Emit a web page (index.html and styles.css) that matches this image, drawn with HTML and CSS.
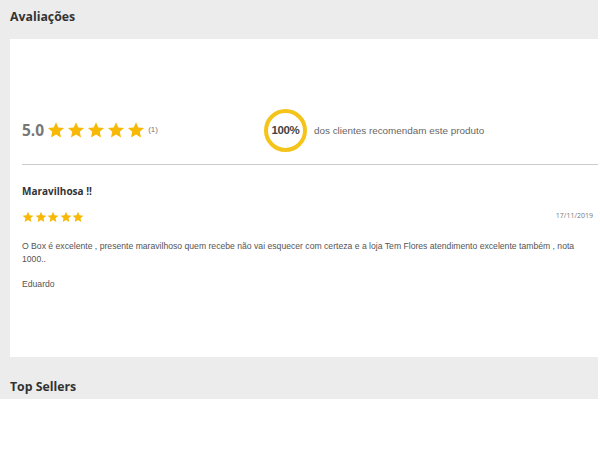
FILE: index.html
```html
<!DOCTYPE html>
<html lang="pt-BR">
<head>
<meta charset="utf-8">
<title>Avaliações</title>
<link rel="stylesheet" href="styles.css">
</head>
<body>
<svg width="0" height="0" style="position:absolute">
  <defs>
    <symbol id="star" viewBox="0 0 24 24"><path d="M12 1.5l3.1 7.1 7.7.7-5.8 5.1 1.7 7.6L12 18l-6.7 4 1.7-7.6-5.8-5.1 7.7-.7z"/></symbol>
  </defs>
</svg>
<section class="reviews">
  <h2 class="section-title">Avaliações</h2>
  <div class="card">
    <div class="summary">
      <div class="score">
        <span class="score-value">5.0</span>
        <span class="stars stars-big">
          <svg><use href="#star"/></svg><svg><use href="#star"/></svg><svg><use href="#star"/></svg><svg><use href="#star"/></svg><svg><use href="#star"/></svg>
        </span>
        <span class="score-count">(1)</span>
      </div>
      <div class="recommend">
        <div class="ring">100%</div>
        <span class="recommend-text">dos clientes recomendam este produto</span>
      </div>
    </div>
    <hr class="divider">
    <article class="review">
      <h3 class="review-title">Maravilhosa !!</h3>
      <div class="review-meta">
        <span class="stars stars-small">
          <svg><use href="#star"/></svg><svg><use href="#star"/></svg><svg><use href="#star"/></svg><svg><use href="#star"/></svg><svg><use href="#star"/></svg>
        </span>
        <span class="review-date">17/11/2019</span>
      </div>
      <p class="review-body">O Box é excelente , presente maravilhoso quem recebe não vai esquecer com certeza e a loja Tem Flores atendimento excelente também , nota 1000..</p>
      <p class="review-author">Eduardo</p>
    </article>
  </div>
  <h2 class="section-title section-title-bottom">Top Sellers</h2>
</section>
</body>
</html>
```

FILE: styles.css
```css
html, body {
  margin: 0;
  padding: 0;
  background: #ffffff;
}

.reviews {
  width: 598px;
  background: #ececec;
  padding: 7px 0 2px 10px;
  box-sizing: border-box;
}

.section-title {
  margin: 0;
  font-family: "Open Sans", sans-serif;
  font-weight: 700;
  font-size: 12.3px;
  line-height: 20px;
  color: #333333;
}

.section-title-bottom {
  margin-top: 20px;
}

.card {
  margin-top: 12px;
  background: #ffffff;
  padding: 69px 5px 66px 12px;
}

.summary {
  display: flex;
  align-items: center;
  height: 44px;
}

.score {
  display: flex;
  align-items: center;
  width: 242px;
}

.score-value {
  font-family: "Open Sans", sans-serif;
  font-weight: 700;
  font-size: 15.5px;
  color: #777777;
  margin-right: 3px;
}

.stars {
  display: inline-flex;
  fill: #f8b906;
}

.stars-big {
  gap: 2px;
}

.stars-big svg {
  width: 18px;
  height: 18px;
}

.stars-small {
  gap: 0.5px;
}

.stars-small svg {
  width: 12px;
  height: 12px;
}

.score-count {
  font-family: "Liberation Sans", Arial, sans-serif;
  font-size: 8px;
  color: #777777;
  margin-left: 3px;
  margin-top: -2px;
}

.recommend {
  display: flex;
  align-items: center;
}

.ring {
  width: 35px;
  height: 35px;
  border: 4px solid #f5c41a;
  border-radius: 50%;
  display: flex;
  align-items: center;
  justify-content: center;
  font-family: "Liberation Sans", Arial, sans-serif;
  font-weight: 700;
  font-size: 11.5px;
  color: #444444;
  letter-spacing: -0.4px;
}

.recommend-text {
  margin-left: 7px;
  font-family: "Liberation Sans", Arial, sans-serif;
  font-size: 9.9px;
  color: #666666;
}

.divider {
  margin: 12px -5px 0 0;
  border: 0;
  border-top: 1px solid #cccccc;
  height: 0;
}

.review {
  padding-top: 18px;
}

.review-title {
  margin: 0;
  font-family: "Open Sans", sans-serif;
  font-weight: 700;
  font-size: 10px;
  line-height: 16px;
  color: #333333;
}

.review-meta {
  margin-top: 11px;
  display: flex;
  align-items: center;
  justify-content: space-between;
  height: 14px;
}

.review-date {
  font-family: "Open Sans", sans-serif;
  font-size: 7px;
  color: #777777;
  margin-top: -4px;
}

.review-body {
  margin: 16px 0 0 0;
  font-family: "Liberation Sans", Arial, sans-serif;
  font-size: 8.65px;
  line-height: 13px;
  color: #555555;
}

.review-author {
  margin: 12px 0 0 0;
  font-family: "Liberation Sans", Arial, sans-serif;
  font-size: 8.65px;
  line-height: 13px;
  color: #555555;
}
```
